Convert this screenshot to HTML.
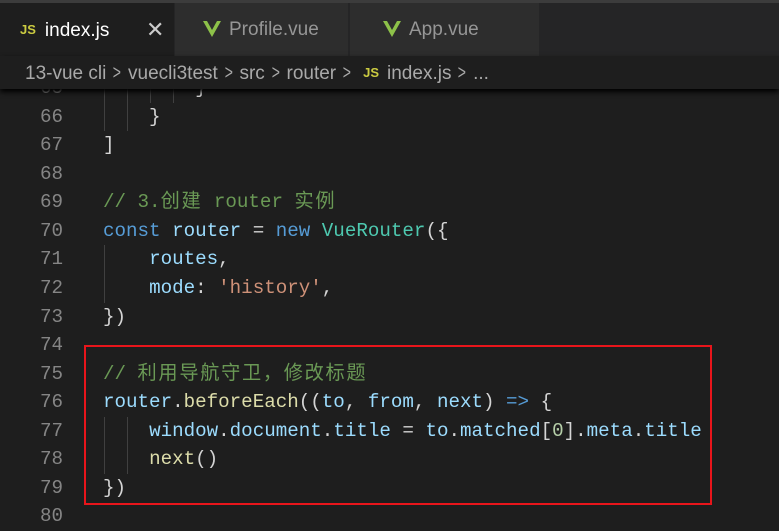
<!DOCTYPE html>
<html><head><meta charset="utf-8"><style>
*{margin:0;padding:0;box-sizing:border-box}
body{width:779px;height:530px;background:#1e1e1e;overflow:hidden;position:relative;font-family:"Liberation Sans","Noto Sans CJK SC",sans-serif}
.top{position:absolute;left:0;top:0;width:779px;height:3px;background:#3c3c3c}
.tabs{position:absolute;left:0;top:3px;width:779px;height:53px;background:#252526}
.tab{position:absolute;top:0;height:53px;background:#2d2d2d;color:#969696;font-size:19px;line-height:53px;border-right:1px solid #252526}
.tab.a{background:#1e1e1e;color:#fff}
.js{color:#cbcb41;font-weight:bold;font-size:13px;vertical-align:2px;margin-right:9px}
.v{display:inline-block;vertical-align:-2px;margin-right:8px}
.bc{position:absolute;left:0;top:56px;width:779px;height:33px;background:#1e1e1e;color:#a9a9a9;font-size:19px;line-height:33px;padding-left:25px;box-shadow:0 3px 5px #000;z-index:2;white-space:nowrap}
.sep{display:inline-block;margin:0 5px;transform:scaleX(0.7);font-size:20px}
.code{position:absolute;left:0;top:74px;width:779px;font-family:"Liberation Mono","Noto Sans CJK SC",monospace;font-size:19.2px}
.l{height:28.57px;line-height:28.57px;position:relative;white-space:pre}
.n{position:absolute;left:0;width:63px;text-align:right;color:#858585}
.t{position:absolute;left:103px;color:#d4d4d4}
.g{position:absolute;top:0;width:1px;height:28.57px;background:#404040}
.cj{letter-spacing:1.7px}
.c{color:#6a9955}.k{color:#569cd6}.vv{color:#9cdcfe}.f{color:#dcdcaa}.cl{color:#4ec9b0}.s{color:#ce9178}.nu{color:#b5cea8}.w{color:#d4d4d4}
.box{position:absolute;left:84px;top:345px;width:628px;height:160px;border:2px solid #e8151b;z-index:3}
</style></head><body>
<div class="top"></div>
<div class="tabs">
<div class="tab a" style="left:0;width:175px;padding-left:20px"><span class="js">JS</span>index.js<span style="position:absolute;left:146px;font-size:22px;color:#ccc">✕</span></div>
<div class="tab" style="left:175px;width:174px;padding-left:28px"><svg class="v" width="18" height="16" viewBox="0 0 18 16"><path d="M0 0h4l5 9 5-9h4L9 16z" fill="#8dc149"/></svg>Profile.vue</div>
<div class="tab" style="left:350px;width:190px;padding-left:33px"><svg class="v" width="18" height="16" viewBox="0 0 18 16"><path d="M0 0h4l5 9 5-9h4L9 16z" fill="#8dc149"/></svg>App.vue</div>
</div>
<div class="bc">13-vue cli<span class="sep">&gt;</span>vuecli3test<span class="sep">&gt;</span>src<span class="sep">&gt;</span>router<span class="sep">&gt;</span>&nbsp;<span class="js" style="margin-right:8px">JS</span>index.js<span class="sep">&gt;</span>...</div>
<div class="code">
<div class="l"><span class="n">65</span><i class="g" style="left:104px"></i><i class="g" style="left:127px"></i><i class="g" style="left:150px"></i><i class="g" style="left:173px"></i><span class="t">        }</span></div>
<div class="l"><span class="n">66</span><i class="g" style="left:104px"></i><i class="g" style="left:127px"></i><span class="t">    }</span></div>
<div class="l"><span class="n">67</span><span class="t">]</span></div>
<div class="l"><span class="n">68</span></div>
<div class="l"><span class="n">69</span><span class="t c">// 3.<span class="cj">创建</span> router <span class="cj">实例</span></span></div>
<div class="l"><span class="n">70</span><span class="t"><span class="k">const</span> <span class="vv">router</span> = <span class="k">new</span> <span class="cl">VueRouter</span>({</span></div>
<div class="l"><span class="n">71</span><i class="g" style="left:104px"></i><span class="t">    <span class="vv">routes</span>,</span></div>
<div class="l"><span class="n">72</span><i class="g" style="left:104px"></i><span class="t">    <span class="vv">mode</span>: <span class="s">'history'</span>,</span></div>
<div class="l"><span class="n">73</span><span class="t">})</span></div>
<div class="l"><span class="n">74</span></div>
<div class="l"><span class="n">75</span><span class="t c">// <span class="cj">利用导航守卫，修改标题</span></span></div>
<div class="l"><span class="n">76</span><span class="t"><span class="vv">router</span>.<span class="f">beforeEach</span>((<span class="vv">to</span>, <span class="vv">from</span>, <span class="vv">next</span>) <span class="k">=&gt;</span> {</span></div>
<div class="l"><span class="n">77</span><i class="g" style="left:104px"></i><i class="g" style="left:127px"></i><span class="t">    <span class="vv">window</span>.<span class="vv">document</span>.<span class="vv">title</span> = <span class="vv">to</span>.<span class="vv">matched</span>[<span class="nu">0</span>].<span class="vv">meta</span>.<span class="vv">title</span></span></div>
<div class="l"><span class="n">78</span><i class="g" style="left:104px"></i><i class="g" style="left:127px"></i><span class="t">    <span class="f">next</span>()</span></div>
<div class="l"><span class="n">79</span><span class="t">})</span></div>
<div class="l"><span class="n">80</span></div>
</div>
<div class="box"></div>
</body></html>
